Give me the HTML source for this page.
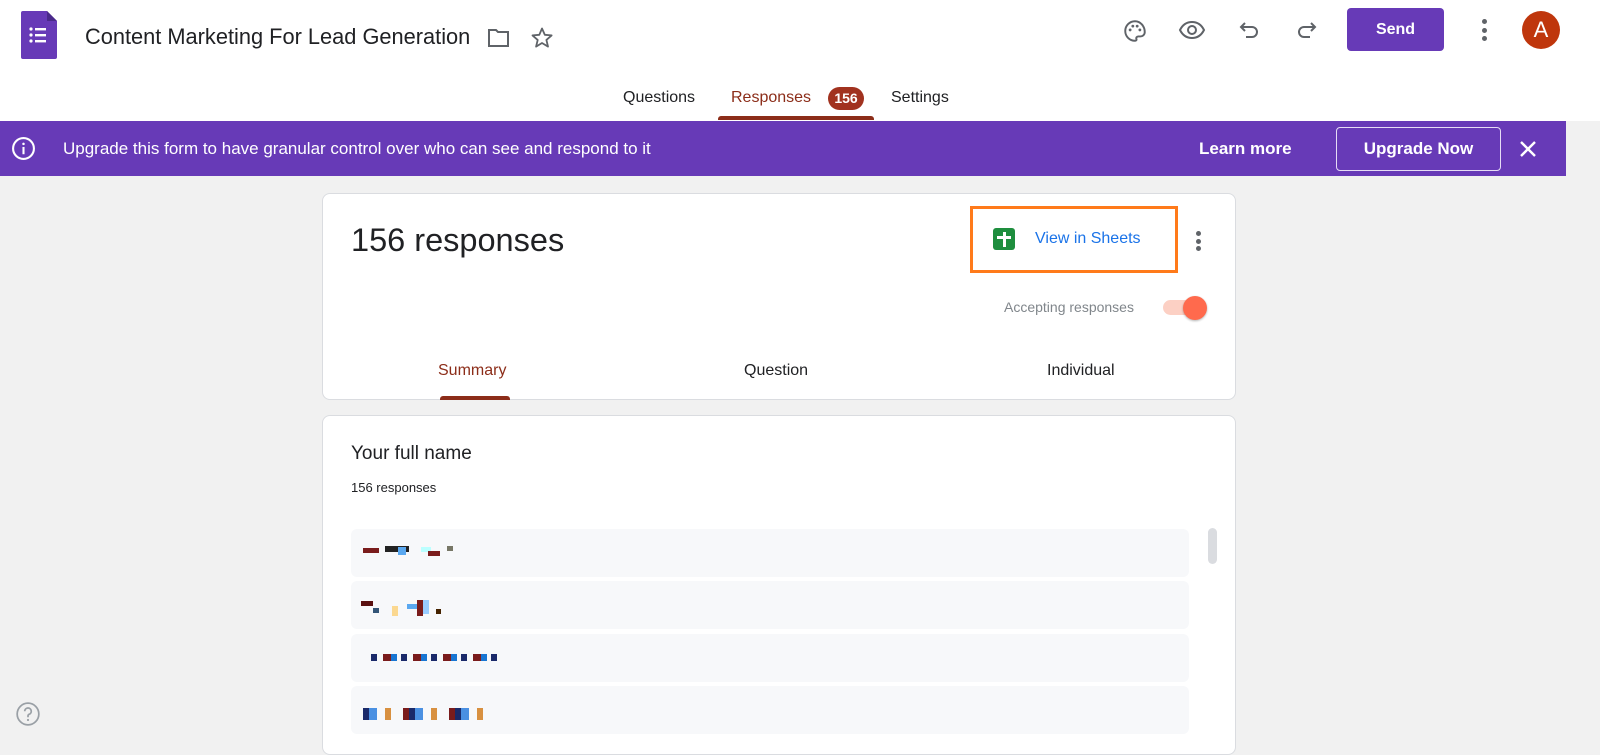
<!DOCTYPE html>
<html><head><style>
*{margin:0;padding:0;box-sizing:border-box}
body{width:1600px;height:740px;overflow:hidden;background:#f1f1f1;font-family:"Liberation Sans",Arial,sans-serif;position:relative;color:#202124}
.top{position:absolute;left:0;top:0;width:1600px;height:121px;background:#fff}
.abs{position:absolute}
.banner{position:absolute;left:0;top:121px;width:1566px;height:55px;background:#673ab7;color:#fff}
.card{position:absolute;left:322px;width:914px;background:#fff;border:1px solid #dadce0;border-radius:8px}
.row{position:absolute;left:28px;width:838px;height:48px;background:#f7f8fa;border-radius:6px}
.px{position:absolute;height:5px}
</style></head><body>
<div class="top">
 <svg class="abs" style="left:20px;top:10px" width="38" height="50" viewBox="0 0 38 50"><path d="M3 1h24l10 10v36a2 2 0 0 1-2 2H3a2 2 0 0 1-2-2V3a2 2 0 0 1 2-2z" fill="#673ab7"/><path d="M27 1v10h10z" fill="#4a2a8a"/><g fill="#fff"><circle cx="11" cy="19" r="1.6"/><circle cx="11" cy="25" r="1.6"/><circle cx="11" cy="31" r="1.6"/><rect x="15" y="18" width="11" height="2.4"/><rect x="15" y="24" width="11" height="2.4"/><rect x="15" y="30" width="11" height="2.4"/></g></svg>
 <div class="abs" style="left:85px;top:24px;font-size:21.8px;color:#202124">Content Marketing For Lead Generation</div>
 <svg class="abs" style="left:487px;top:27px" width="24" height="22" viewBox="0 0 24 22"><path d="M2 3h7l2 2h10v14H2z" fill="none" stroke="#5f6368" stroke-width="2"/></svg>
 <svg class="abs" style="left:530px;top:26px" width="24" height="24" viewBox="0 0 24 24"><path d="M12 2.5l2.8 6.3 6.8.6-5.2 4.5 1.6 6.7L12 17l-5.9 3.6 1.6-6.7L2.5 9.4l6.8-.6z" fill="none" stroke="#5f6368" stroke-width="1.8" stroke-linejoin="round"/></svg>
 <svg class="abs" style="left:1122px;top:18px" width="26" height="26" viewBox="0 0 24 24"><path d="M12 3a9 9 0 0 0 0 18c1.2 0 1.6-.8 1.3-1.6-.4-1 .2-2.4 1.7-2.4H17a4 4 0 0 0 4-4c0-5.5-4-10-9-10z" fill="none" stroke="#5f6368" stroke-width="1.8"/><g fill="#5f6368"><circle cx="7.5" cy="11" r="1.3"/><circle cx="10" cy="7.5" r="1.3"/><circle cx="14" cy="7.5" r="1.3"/><circle cx="16.5" cy="11" r="1.3"/></g></svg>
 <svg class="abs" style="left:1178px;top:20px" width="28" height="20" viewBox="0 0 28 20"><path d="M2 10C5 4 9 2 14 2s9 2 12 8c-3 6-7 8-12 8S5 16 2 10z" fill="none" stroke="#5f6368" stroke-width="2"/><circle cx="14" cy="10" r="4" fill="none" stroke="#5f6368" stroke-width="2"/></svg>
 <svg class="abs" style="left:1238px;top:20px" width="24" height="22" viewBox="0 0 24 22"><path d="M7 3L3 7l4 4M3 7h11a5 5 0 0 1 0 10H8" fill="none" stroke="#5f6368" stroke-width="2"/></svg>
 <svg class="abs" style="left:1294px;top:20px" width="24" height="22" viewBox="0 0 24 22"><path d="M17 3l4 4-4 4M21 7H10a5 5 0 0 0 0 10h6" fill="none" stroke="#5f6368" stroke-width="2"/></svg>
 <div class="abs" style="left:1347px;top:8px;width:97px;height:43px;background:#673ab7;border-radius:4px;color:#fff;font-weight:bold;font-size:16px;text-align:center;line-height:43px">Send</div>
 <div class="abs" style="left:1482px;top:19px;width:5px;height:22px"><div style="width:5px;height:5px;border-radius:50%;background:#5f6368;margin-bottom:3.5px"></div><div style="width:5px;height:5px;border-radius:50%;background:#5f6368;margin-bottom:3.5px"></div><div style="width:5px;height:5px;border-radius:50%;background:#5f6368"></div></div>
 <div class="abs" style="left:1522px;top:11px;width:38px;height:38px;border-radius:50%;background:#bf360c;color:#fff;font-size:22px;text-align:center;line-height:38px">A</div>
 <div class="abs" style="left:623px;top:89px;font-size:16px">Questions</div>
 <div class="abs" style="left:731px;top:89px;font-size:16px;color:#8c2d19">Responses</div>
 <div class="abs" style="left:828px;top:87px;width:36px;height:23px;border-radius:12px;background:#a1321f;color:#fff;font-weight:bold;font-size:14px;text-align:center;line-height:23px">156</div>
 <div class="abs" style="left:891px;top:89px;font-size:16px">Settings</div>
 <div class="abs" style="left:718px;top:116px;width:156px;height:4px;background:#8c2d19;border-radius:3px 3px 0 0"></div>
</div>
<div class="banner">
 <svg class="abs" style="left:11px;top:15px" width="25" height="25" viewBox="0 0 24 24"><circle cx="12" cy="12" r="10" fill="none" stroke="#fff" stroke-width="2"/><rect x="11" y="10.5" width="2" height="7" fill="#fff"/><circle cx="12" cy="7.5" r="1.2" fill="#fff"/></svg>
 <div class="abs" style="left:63px;top:18px;font-size:17px">Upgrade this form to have granular control over who can see and respond to it</div>
 <div class="abs" style="left:1199px;top:18px;font-size:17px;font-weight:bold">Learn more</div>
 <div class="abs" style="left:1336px;top:6px;width:165px;height:44px;border:1px solid #e6dcf5;border-radius:4px;font-size:17px;font-weight:bold;text-align:center;line-height:42px">Upgrade Now</div>
 <svg class="abs" style="left:1519px;top:19px" width="18" height="18" viewBox="0 0 18 18"><path d="M2 2l14 14M16 2L2 16" stroke="#fff" stroke-width="2.4"/></svg>
</div>
<div class="card" style="top:193px;height:207px">
 <div class="abs" style="left:28px;top:28px;font-size:32.5px">156 responses</div>
 <div class="abs" style="left:647px;top:12px;width:208px;height:67px;border:3px solid #ff7a1a"></div>
 <div class="abs" style="left:670px;top:34px;width:22px;height:22px;background:#1e8e3e;border-radius:3px"><div style="position:absolute;left:10px;top:4px;width:2.5px;height:15px;background:#fff"></div><div style="position:absolute;left:4px;top:8px;width:14px;height:2.5px;background:#fff"></div></div>
 <div class="abs" style="left:712px;top:36px;font-size:16px;color:#1a73e8">View in Sheets</div>
 <div class="abs" style="left:873px;top:37px"><div style="width:5px;height:5px;border-radius:50%;background:#5f6368;margin-bottom:2.5px"></div><div style="width:5px;height:5px;border-radius:50%;background:#5f6368;margin-bottom:2.5px"></div><div style="width:5px;height:5px;border-radius:50%;background:#5f6368"></div></div>
 <div class="abs" style="left:681px;top:105px;font-size:14px;color:#80868b">Accepting responses</div>
 <div class="abs" style="left:840px;top:106px;width:36px;height:15px;border-radius:8px;background:#fcd0c4"></div>
 <div class="abs" style="left:860px;top:102px;width:24px;height:24px;border-radius:50%;background:#ff6a4d;box-shadow:0 1px 2px rgba(0,0,0,.3)"></div>
 <div class="abs" style="left:115px;top:168px;font-size:16px;color:#8c2d19">Summary</div>
 <div class="abs" style="left:421px;top:168px;font-size:16px">Question</div>
 <div class="abs" style="left:724px;top:168px;font-size:16px">Individual</div>
 <div class="abs" style="left:117px;top:202px;width:70px;height:4px;background:#8c2d19;border-radius:3px 3px 0 0"></div>
</div>
<div class="card" style="top:415px;height:340px">
 <div class="abs" style="left:28px;top:27px;font-size:19px">Your full name</div>
 <div class="abs" style="left:28px;top:64px;font-size:13px">156 responses</div>
 <div class="row" style="top:113px"></div>
 <div class="row" style="top:165px"></div>
 <div class="row" style="top:218px"></div>
 <div class="row" style="top:270px"></div>
 <div class="abs" style="left:885px;top:112px;width:9px;height:36px;background:#dadce0;border-radius:5px"></div>
 <div class="px" style="left:40px;top:132px;width:16px;background:#7a1c1c"></div>
 <div class="px" style="left:62px;top:130px;width:24px;background:#222;height:6px"></div>
 <div class="px" style="left:75px;top:131px;width:8px;background:#5aa8f0;height:8px"></div>
 <div class="px" style="left:98px;top:131px;width:10px;background:#bff"></div>
 <div class="px" style="left:105px;top:135px;width:12px;background:#7a1c1c"></div>
 <div class="px" style="left:124px;top:130px;width:6px;background:#776"></div>
 <div class="px" style="left:38px;top:185px;width:12px;background:#5a1010"></div>
 <div class="px" style="left:50px;top:192px;width:6px;background:#357"></div>
 <div class="px" style="left:69px;top:190px;width:6px;height:10px;background:#fbd890"></div>
 <div class="px" style="left:84px;top:188px;width:16px;background:#5aa8f0"></div>
 <div class="px" style="left:94px;top:184px;width:6px;height:16px;background:#7a1c1c"></div>
 <div class="px" style="left:100px;top:184px;width:6px;height:14px;background:#9cf"></div>
 <div class="px" style="left:113px;top:193px;width:5px;background:#420"></div>
 <div class="px" style="left:48px;top:238px;width:130px;height:7px;background:repeating-linear-gradient(90deg,#1a2a6a 0 6px,transparent 6px 12px,#7a1c1c 12px 20px,#1976d2 20px 26px,transparent 26px 30px)"></div>
 <div class="px" style="left:40px;top:292px;width:120px;height:12px;background:repeating-linear-gradient(90deg,#1a2a6a 0 6px,#4a90e2 6px 14px,transparent 14px 22px,#d89040 22px 28px,transparent 28px 40px,#7a1c1c 40px 46px)"></div>
</div>
<svg class="abs" style="left:15px;top:701px" width="26" height="26" viewBox="0 0 24 24"><circle cx="12" cy="12" r="10" fill="none" stroke="#9aa0a6" stroke-width="1.6"/><path d="M9 9.5a3 3 0 1 1 4 2.8c-.7.3-1 .8-1 1.6V15" fill="none" stroke="#9aa0a6" stroke-width="1.6"/><circle cx="12" cy="17.5" r="1" fill="#9aa0a6"/></svg>
</body></html>
